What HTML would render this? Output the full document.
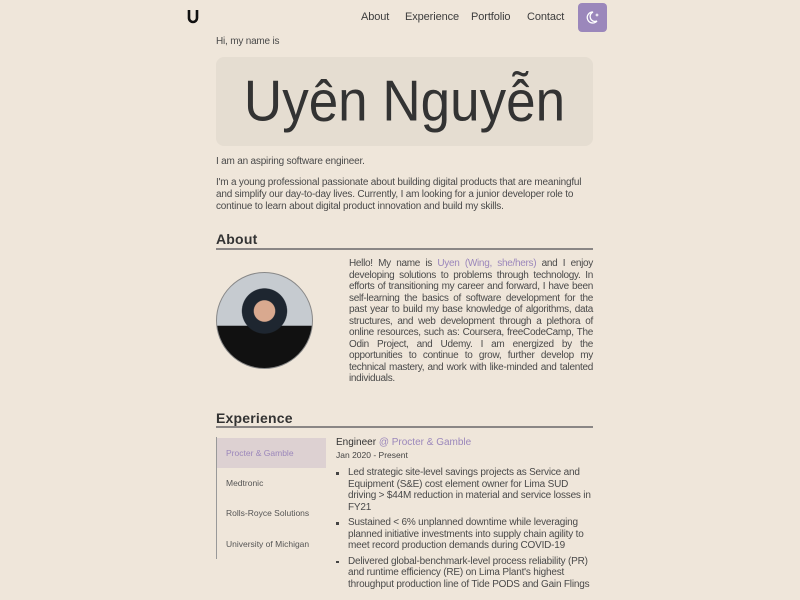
<!DOCTYPE html>
<html><head><meta charset="utf-8"><style>
*{margin:0;padding:0;box-sizing:border-box}
body{width:800px;height:600px;overflow:hidden;background:#efe6da;font-family:"Liberation Sans",sans-serif;color:#4a4a4a;position:relative}
.a{position:absolute}
.nav a{position:absolute;top:11px;font-size:11px;color:#3d3d3d;text-decoration:none;letter-spacing:-.1px}
.p{font-size:10px;line-height:12px;color:#4a4a4a;letter-spacing:-.2px}
h2{position:absolute;font-size:14px;font-weight:600;color:#333;letter-spacing:.2px}
.rule{position:absolute;left:216px;width:377px;height:2px;background:#8a8685}
.tab{position:absolute;left:217px;width:109px;height:30px;font-size:8.5px;color:#555;padding:10px 0 0 9px}
ul{list-style:none}
li{position:relative;padding-left:12px;margin-bottom:4px}
li:before{content:"";position:absolute;left:0;top:5px;width:2.5px;height:2.5px;background:#444}
</style></head><body>
<div class="a" style="left:187px;top:8px;width:12px;height:16px">
<svg width="12" height="16" viewBox="0 0 12 16"><path d="M2 2V10a4 4 0 0 0 8 0V2" fill="none" stroke="#111" stroke-width="2.6"/></svg></div>
<div class="nav">
<a style="left:361px">About</a><a style="left:405px">Experience</a><a style="left:471px">Portfolio</a><a style="left:527px">Contact</a></div>
<div class="a" style="left:578px;top:3px;width:29px;height:29px;background:#9b87bb;border-radius:4px">
<svg width="29" height="29" viewBox="0 0 29 29"><path d="M15 9a5.5 5.5 0 1 0 4 9a4.5 4.5 0 0 1-4-9z" fill="none" stroke="#fff" stroke-width="1.3"/><path d="M19 10l.6 1.4 1.4.6-1.4.6-.6 1.4-.6-1.4-1.4-.6 1.4-.6z" fill="#fff"/></svg></div>
<div class="a p" style="left:216px;top:36px;font-size:10px">Hi, my name is</div>
<div class="a" style="left:216px;top:57px;width:377px;height:89px;background:#e5ddd1;border-radius:8px"></div>
<div class="a" style="left:216px;top:66px;width:377px;text-align:center;font-size:53px;color:#333;line-height:72px;transform:scaleY(1.08)">Uyên Nguyễn</div>
<div class="a p" style="left:216px;top:156px">I am an aspiring software engineer.</div>
<div class="a p" style="left:216px;top:177px;width:377px">I'm a young professional passionate about building digital products that are meaningful and simplify our day-to-day lives. Currently, I am looking for a junior developer role to continue to learn about digital product innovation and build my skills.</div>
<h2 style="left:216px;top:231px">About</h2>
<div class="rule" style="top:248px"></div>
<div class="a" style="left:216px;top:272px;width:97px;height:97px;border-radius:50%;border:1.5px solid #888;background:radial-gradient(circle at 50% 40%,#d9a98f 0 14%,#1e2630 15% 30%,transparent 31%),linear-gradient(#c6cbd0 0 55%,#111 56%);overflow:hidden"></div>
<div class="a p" style="left:349px;top:258px;width:244px;text-align:justify;line-height:11.5px;letter-spacing:-.3px">Hello! My name is <span style="color:#9b87bb">Uyen (Wing, she/hers)</span> and I enjoy developing solutions to problems through technology. In efforts of transitioning my career and forward, I have been self-learning the basics of software development for the past year to build my base knowledge of algorithms, data structures, and web development through a plethora of online resources, such as: Coursera, freeCodeCamp, The Odin Project, and Udemy. I am energized by the opportunities to continue to grow, further develop my technical mastery, and work with like-minded and talented individuals.</div>
<h2 style="left:216px;top:410px">Experience</h2>
<div class="rule" style="top:426px;height:1.5px"></div>
<div class="a" style="left:216px;top:437px;width:1px;height:122px;background:#999"></div>
<div class="tab" style="top:438px;background:#ddd1d2;color:#9b87bb">Procter &amp; Gamble</div>
<div class="tab" style="top:468px">Medtronic</div>
<div class="tab" style="top:498px">Rolls-Royce Solutions</div>
<div class="tab" style="top:529px">University of Michigan</div>
<div class="a" style="left:336px;top:437px;font-size:10px;color:#333">Engineer <span style="color:#9b87bb">@ Procter &amp; Gamble</span></div>
<div class="a" style="left:336px;top:450px;font-size:8.5px;color:#444">Jan 2020 - Present</div>
<ul class="a p" style="left:336px;top:467px;width:255px;line-height:11.5px">
<li>Led strategic site-level savings projects as Service and Equipment (S&amp;E) cost element owner for Lima SUD driving &gt; $44M reduction in material and service losses in FY21</li>
<li>Sustained &lt; 6% unplanned downtime while leveraging planned initiative investments into supply chain agility to meet record production demands during COVID-19</li>
<li>Delivered global-benchmark-level process reliability (PR) and runtime efficiency (RE) on Lima Plant's highest throughput production line of Tide PODS and Gain Flings</li>
</ul>
</body></html>
